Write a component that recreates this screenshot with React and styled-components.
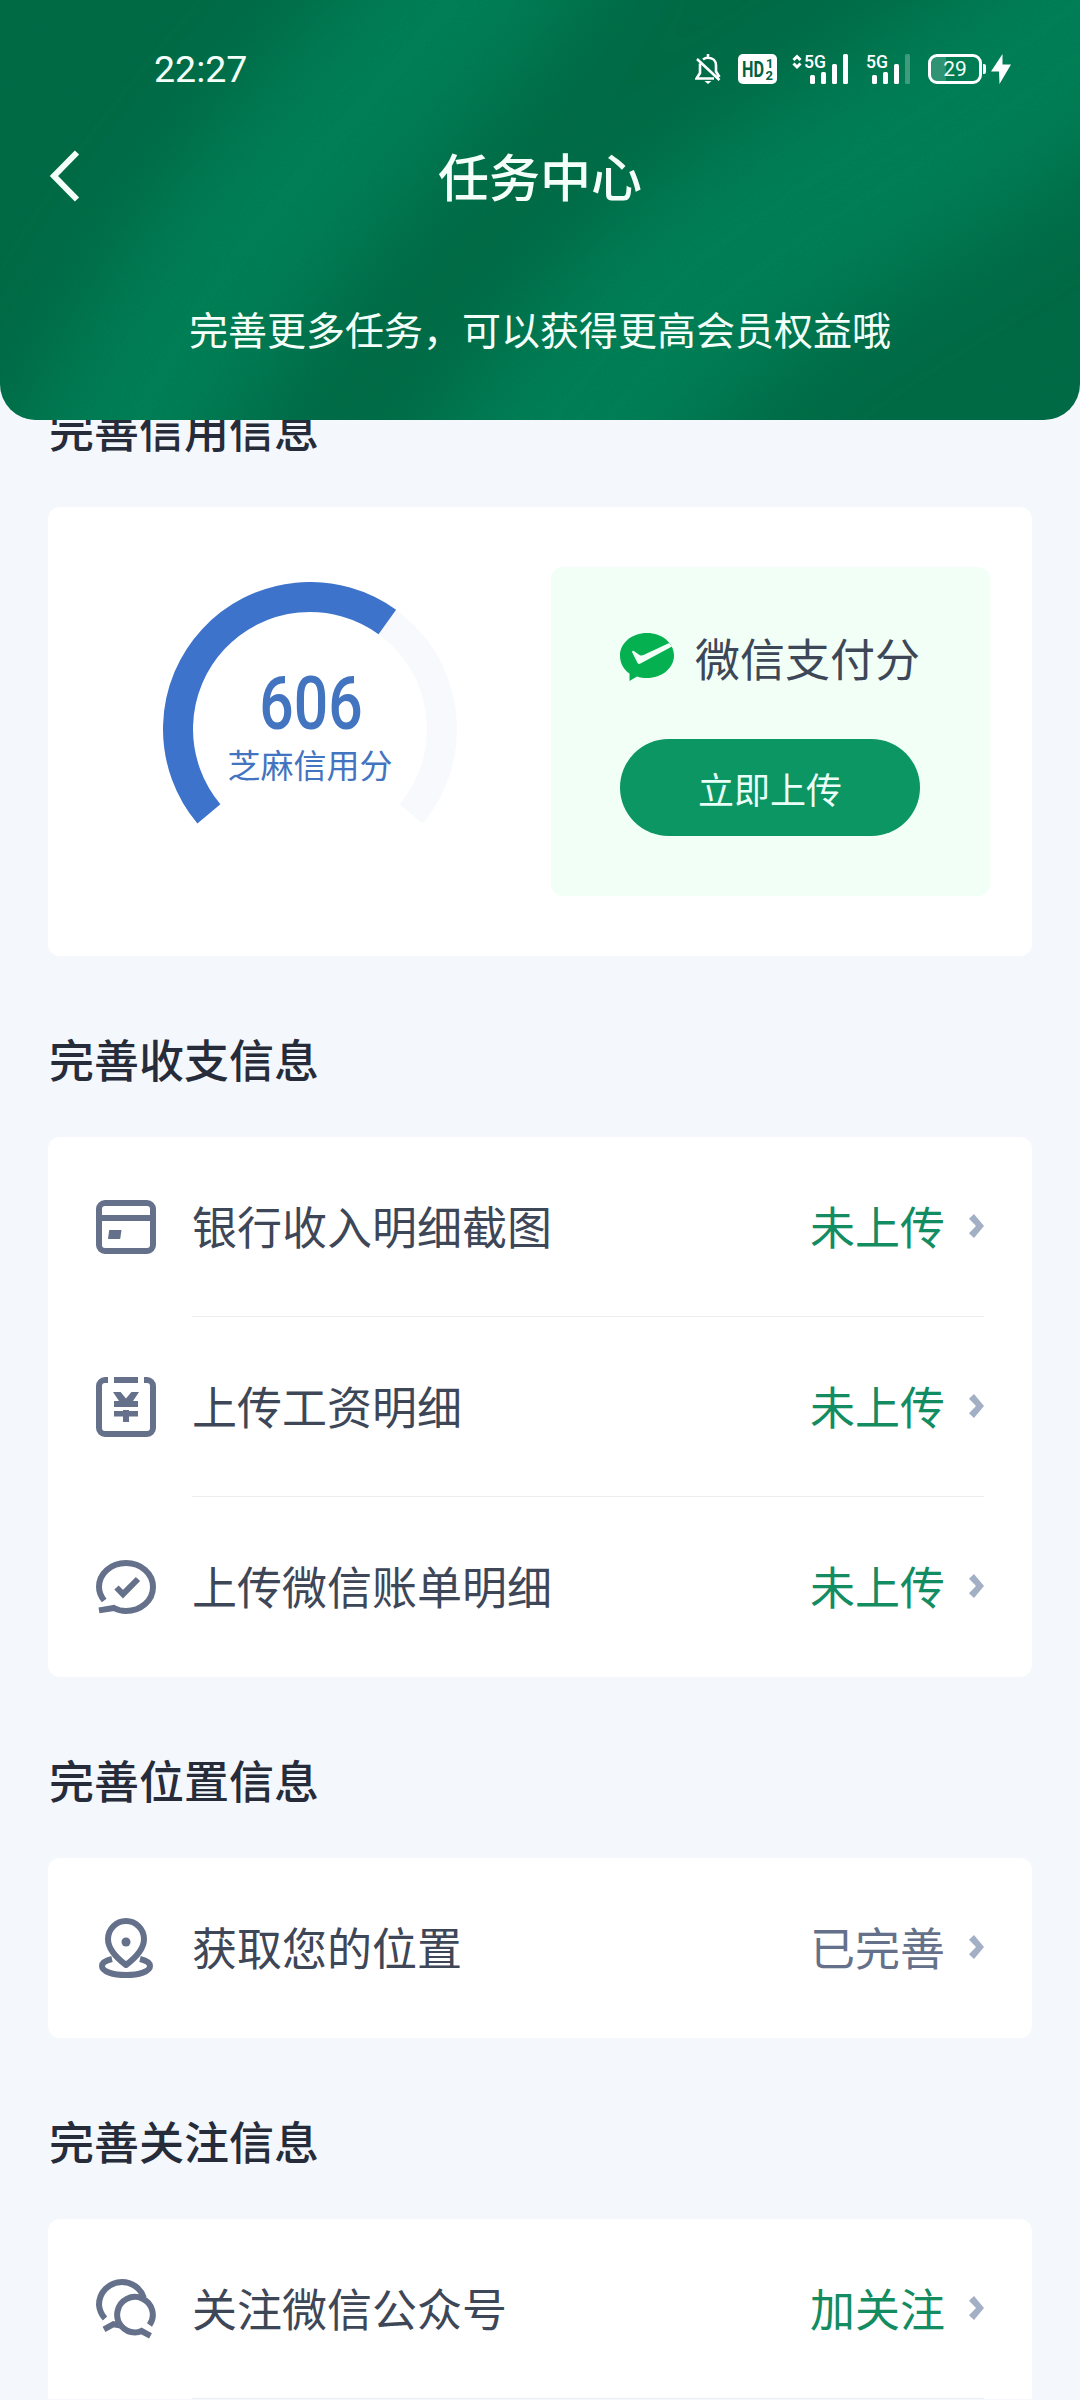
import React from "react";
import styled, { createGlobalStyle } from "styled-components";

const GAUGE_RADIUS = 132;
const GAUGE_START = -130;
const GAUGE_END = 130;
const MAX_SCORE = 950;

const polar = (deg) => {
  const rad = (deg * Math.PI) / 180;
  return [
    147 + GAUGE_RADIUS * Math.sin(rad),
    147 - GAUGE_RADIUS * Math.cos(rad),
  ].join(" ");
};

const arc = (from, to) =>
  `M${polar(from)} A${GAUGE_RADIUS} ${GAUGE_RADIUS} 0 ${
    to - from > 180 ? 1 : 0
  } 1 ${polar(to)}`;

const CardIcon = () => (
  <RowIcon viewBox="0 0 60 60">
    <rect x="3" y="6" width="54" height="48" rx="6" />
    <path d="M3 21H57" />
    <path d="M13.2 33H25.5L24.2 42H12z" fill="#65718a" stroke="none" />
  </RowIcon>
);

const SalaryIcon = () => (
  <RowIcon viewBox="0 0 60 60">
    <path d="M12 3H9a6 6 0 0 0-6 6V51a6 6 0 0 0 6 6H51a6 6 0 0 0 6-6V9a6 6 0 0 0-6-6H48M18 3H42" />
    <path
      d="M17 15H24.6L30 21.4L35.4 15H43L37 24H42V30H18V24H23zM18 34H27V33H33V34H42V39.5H33V45H27V39.5H18z"
      fill="#65718a"
      stroke="none"
    />
  </RowIcon>
);

const BillIcon = () => (
  <RowIcon viewBox="0 0 60 60">
    <path d="M8.2 43.5C5 39.5 3 34.7 3 30C3 16.5 15 6 30 6S57 16.5 57 30S45 54 30 54C25.5 54 21.5 53 18 51L3 53.4" />
    <path d="M20.5 30.5L27 37.2L42 22" />
  </RowIcon>
);

const PlaceIcon = () => (
  <RowIcon viewBox="0 0 60 60">
    <path
      d="M30 47C22 41 12 32 12 21a18 18 0 0 1 36 0C48 32 38 41 30 47z"
      strokeLinejoin="round"
    />
    <path d="M16 41C9.5 42.5 6 45 6 48C6 53.5 17 57 30 57S54 53.5 54 48C54 45 50.5 42.5 44 41" />
    <circle cx="30" cy="24" r="4.5" fill="#65718a" stroke="none" />
  </RowIcon>
);

const ChatIcon = () => (
  <RowIcon viewBox="0 0 60 60">
    <path d="M9 39.5A23 23 0 0 1 3 26A23 23 0 0 1 26 3A23 23 0 0 1 47.8 18.6" />
    <path d="M8 50.3L17.5 45.2L25 46.5" />
    <path d="M53.5 46A17.8 17.8 0 1 0 39 53.5C41.5 53.5 43.5 53 45.5 52L54.5 56.8" />
  </RowIcon>
);

const sections = [
  {
    title: "完善收支信息",
    rows: [
      { Icon: CardIcon, label: "银行收入明细截图", status: "未上传" },
      { Icon: SalaryIcon, label: "上传工资明细", status: "未上传" },
      { Icon: BillIcon, label: "上传微信账单明细", status: "未上传" },
    ],
  },
  {
    title: "完善位置信息",
    rows: [
      { Icon: PlaceIcon, label: "获取您的位置", status: "已完善", done: true },
    ],
  },
  {
    title: "完善关注信息",
    open: true,
    rows: [{ Icon: ChatIcon, label: "关注微信公众号", status: "加关注" }],
  },
];

const Signal = ({ arrows, weak }) => (
  <SignalIcon width={arrows ? 56 : 44} height="30">
    {arrows && (
      <path
        d="M1.5 6L5 2.5L8.5 6M1.5 9.5L5 13L8.5 9.5"
        fill="none"
        stroke="#fff"
        strokeWidth="3"
      />
    )}
    <g transform={arrows ? "translate(12 0)" : undefined}>
      <SignalText x="0" y="13.5" textLength="22" lengthAdjust="spacingAndGlyphs">
        5G
      </SignalText>
      <rect x="6" y="21" width="5" height="9" rx="1.5" />
      <rect x="17" y="18" width="5" height="12" rx="1.5" />
      <rect x="28" y="10" width="5" height="20" rx="1.5" />
      <rect
        x="39"
        y="0"
        width="5"
        height="30"
        rx="1.5"
        fillOpacity={weak ? 0.25 : 1}
      />
    </g>
  </SignalIcon>
);

const StatusBar = () => (
  <Status>
    <Time>22:27</Time>
    <svg width="26" height="30" fill="none" stroke="#fff" strokeWidth="2.6">
      <path d="M5 9.5V19L1.5 24.5H19M8 5.5C9.5 4.3 11 3.8 13 3.8C18 3.8 21 7 21 11.5V17.5L24.5 23M13 0V4M2 5L24.5 26" />
      <path d="M9.5 27H16.5L13 30z" fill="#fff" stroke="none" />
    </svg>
    <HdBadge viewBox="0 0 39 30">
      <rect width="39" height="30" rx="5" fill="#fff" />
      <text x="4" y="23" fontSize="22" textLength="22" lengthAdjust="spacingAndGlyphs">
        HD
      </text>
      <text x="28" y="14" fontSize="13">
        1
      </text>
      <text x="27.5" y="25.500" fontSize="13">
        2
      </text>
    </HdBadge>
    <Signal arrows />
    <SecondSignal>
      <Signal weak />
    </SecondSignal>
    <Battery>29</Battery>
    <BatteryNub />
    <svg width="20" height="30" fill="#fff">
      <path d="M11.5 0L0 17.5H8L8.5 30L20 10.5H11.5z" />
    </svg>
  </Status>
);

// soft light bands with a fine grain on top
const HeaderArt = () => (
  <Art viewBox="0 0 1080 420">
    <filter id="soft" x="-50%" y="-50%" width="200%" height="200%">
      <feGaussianBlur stdDeviation="46" />
    </filter>
    <filter id="grain" x="0" y="0" width="100%" height="100%">
      <feTurbulence type="fractalNoise" baseFrequency="0.45" numOctaves="2" />
      <feColorMatrix values="0 0 0 0 0  0 0 0 0 0.15  0 0 0 0 0.1  1.2 0 0 0 -0.4" />
    </filter>
    <g filter="url(#soft)" fill="none" stroke="#007f54">
      <path
        d="M540 -120C460 10 370 90 290 190C220 280 160 350 80 540"
        strokeWidth="190"
      />
      <path
        d="M1220 -100C1060 70 910 140 790 220C670 300 600 380 480 560"
        strokeWidth="215"
      />
    </g>
    <rect width="1080" height="420" filter="url(#grain)" opacity="0.25" />
  </Art>
);

const ScoreGauge = ({ score }) => {
  const reached =
    GAUGE_START + ((GAUGE_END - GAUGE_START) * score) / MAX_SCORE;

  return (
    <Gauge>
      <GaugeRing viewBox="0 0 294 294">
        <path d={arc(GAUGE_START, GAUGE_END)} stroke="#f7f9fc" />
        <path d={arc(GAUGE_START, reached)} stroke="#3e73cc" />
      </GaugeRing>
      <Score>{score}</Score>
      <ScoreName>芝麻信用分</ScoreName>
    </Gauge>
  );
};

const TaskRow = ({ Icon, label, status, done, divided }) => (
  <Row>
    <Icon />
    <RowBody $divided={divided}>
      <RowLabel>{label}</RowLabel>
      <RowStatus $done={done}>{status}</RowStatus>
      <Chevron viewBox="0 0 15 24">
        <path d="M5 0L15 12L5 24L0 19.3L7 12L0 4.7z" />
      </Chevron>
    </RowBody>
  </Row>
);

const App = () => (
  <Page>
    <GlobalStyle />
    <Header>
      <HeaderArt />
      <StatusBar />
      <TitleBar>
        <BackIcon viewBox="0 0 30 52">
          <path d="M27 2.5L4 26L27 49.5" />
        </BackIcon>
        <PageTitle>任务中心</PageTitle>
      </TitleBar>
      <Subtitle>完善更多任务，可以获得更高会员权益哦</Subtitle>
    </Header>

    <Content>
      <SectionTitle>完善信用信息</SectionTitle>
      <CreditCard>
        <ScoreGauge score={606} />
        <WechatPanel>
          <WechatTitle>
            <svg width="54" height="48" viewBox="0 0 54 48">
              <path
                d="M27 0C42 0 54 10 54 22.5S42 45 27 45C23.5 45 20 44.5 17 43.5C14.5 45 12 46.5 9.5 48V40.5C3.5 36.5 0 30 0 22.5C0 10 12 0 27 0z"
                fill="#04b050"
              />
              <path
                d="M12 19C12.5 17.5 13.5 17.5 14.5 18.5L19.5 22C21 22.8 22 22.5 23.5 22L49.2 10L52 13.5L20.5 30.5C19 31.3 18 31 17.3 29.5z"
                fill="#f1fff7"
              />
            </svg>
            <span>微信支付分</span>
          </WechatTitle>
          <UploadButton>立即上传</UploadButton>
        </WechatPanel>
      </CreditCard>

      {sections.map(({ title, rows, open }) => (
        <React.Fragment key={title}>
          <SectionTitle>{title}</SectionTitle>
          <Card $open={open}>
            {rows.map((row, i) => (
              <TaskRow
                key={row.label}
                {...row}
                divided={open || i < rows.length - 1}
              />
            ))}
          </Card>
        </React.Fragment>
      ))}
    </Content>
  </Page>
);

export default App;

const GlobalStyle = createGlobalStyle`
  * {
    box-sizing: border-box;
  }

  body {
    margin: 0;
    background-color: #f4f8fc;
    font-family: "Noto Sans CJK SC", sans-serif;
  }
`;

const Page = styled.div`
  width: 1080px;
  height: 2400px;
  overflow: hidden;
`;

const Header = styled.header`
  position: relative;
  z-index: 1;
  height: 420px;
  overflow: hidden;
  border-radius: 0 0 36px 36px;
  color: #f4fffa;
  background-color: #006a45;
`;

const Art = styled.svg`
  position: absolute;
  inset: 0;
  width: 100%;
  height: 100%;
`;

const Status = styled.div`
  position: relative;
  display: flex;
  align-items: center;
  height: 138px;
  padding: 0 69px 0 153px;
  font-family: Roboto, sans-serif;
`;

const Time = styled.span`
  flex: 1;
  padding-left: 1px;
  font-size: 37.5px;
`;

const HdBadge = styled.svg`
  width: 39px;
  height: 30px;
  margin: 0 15px 0 17px;
  overflow: visible;
  fill: #00613f;
  font-weight: 700;
`;

const SignalIcon = styled.svg`
  overflow: visible;
  fill: #fff;
`;

const SignalText = styled.text`
  font-size: 18px;
  font-weight: 500;
`;

const SecondSignal = styled.div`
  display: flex;
  margin: 0 18px;
`;

const Battery = styled.div`
  display: flex;
  align-items: center;
  justify-content: center;
  width: 54px;
  height: 30px;
  border: 3px solid #fff;
  border-radius: 9px;
  background: linear-gradient(
    90deg,
    rgba(255, 255, 255, 0.18) 32%,
    transparent 32%
  );
  font-size: 21px;
`;

const BatteryNub = styled.div`
  width: 3px;
  height: 10px;
  margin: 0 5px 0 1px;
  border-radius: 0 2px 2px 0;
  background-color: #fff;
`;

const TitleBar = styled.div`
  position: relative;
  display: grid;
  grid-template-columns: 52px 1fr 52px;
  align-items: center;
  height: 76px;
  padding: 0 50px;
`;

const BackIcon = styled.svg`
  width: 30px;
  height: 52px;
  fill: none;
  stroke: #f4fffa;
  stroke-width: 6;
`;

const PageTitle = styled.h1`
  margin: -3px 0 0;
  font-size: 51px;
  font-weight: 500;
  line-height: 76px;
  text-align: center;
`;

const Subtitle = styled.p`
  position: relative;
  margin: 85px 0 0;
  font-size: 39px;
  line-height: 58px;
  text-align: center;
`;

const Content = styled.main`
  margin-top: -94px;
  padding: 0 48px;
`;

const SectionTitle = styled.h2`
  height: 181px;
  margin: 0;
  padding: 73px 0 0 1px;
  color: #262c3a;
  font-size: 45px;
  font-weight: 500;
  line-height: 60px;
`;

const Card = styled.section`
  border-radius: ${({ $open }) => ($open ? "12px 12px 0 0" : "12px")};
  background-color: #fff;
`;

const CreditCard = styled(Card)`
  display: flex;
  justify-content: space-between;
  height: 449px;
  padding: 60px 42px 60px 115px;
`;

const Gauge = styled.div`
  display: flex;
  flex-direction: column;
  align-items: center;
  position: relative;
  width: 294px;
  margin-top: 15px;
  padding-top: 84px;
  color: #4374c0;
`;

const GaugeRing = styled.svg`
  position: absolute;
  top: 0;
  left: 0;
  width: 294px;
  height: 294px;
  fill: none;
  stroke-width: 30;
`;

const Score = styled.strong`
  padding-left: 2px;
  font-family: Roboto, sans-serif;
  font-size: 74px;
  font-weight: 500;
  line-height: 75px;
  transform: scaleX(0.82);
`;

const ScoreName = styled.span`
  font-size: 33px;
  line-height: 46px;
`;

const WechatPanel = styled.div`
  width: 439px;
  padding: 66px 69px 60px;
  border-radius: 12px;
  background-color: #f1fff7;
`;

const WechatTitle = styled.div`
  display: flex;
  align-items: flex-start;
  gap: 21px;
  height: 54px;
  color: #3e4757;
  font-size: 45px;
  line-height: 50px;
  white-space: nowrap;

  svg {
    flex: none;
  }
`;

const UploadButton = styled.button`
  width: 300px;
  height: 97px;
  margin-top: 52px;
  border: none;
  border-radius: 50px;
  background-color: #0b9664;
  color: #e9fff8;
  font-family: inherit;
  font-size: 36px;
`;

const Row = styled.div`
  display: flex;
  align-items: center;
  gap: 36px;
  height: 180px;
  padding: 0 48px;
`;

const RowIcon = styled.svg`
  flex: none;
  width: 60px;
  height: 60px;
  fill: none;
  stroke: #65718a;
  stroke-width: 6;
`;

const RowBody = styled.div`
  display: flex;
  flex: 1;
  align-items: center;
  height: 100%;
  padding-bottom: 2px;
  border-bottom: 1px solid
    ${({ $divided }) => ($divided ? "#eceef0" : "transparent")};
  font-size: 45px;
`;

const RowLabel = styled.span`
  flex: 1;
  color: #3e4757;
`;

const RowStatus = styled.span`
  color: ${({ $done }) => ($done ? "#65718a" : "#138c62")};
`;

const Chevron = styled.svg`
  width: 15px;
  height: 24px;
  margin-left: 24px;
  fill: #a3afc4;
`;
